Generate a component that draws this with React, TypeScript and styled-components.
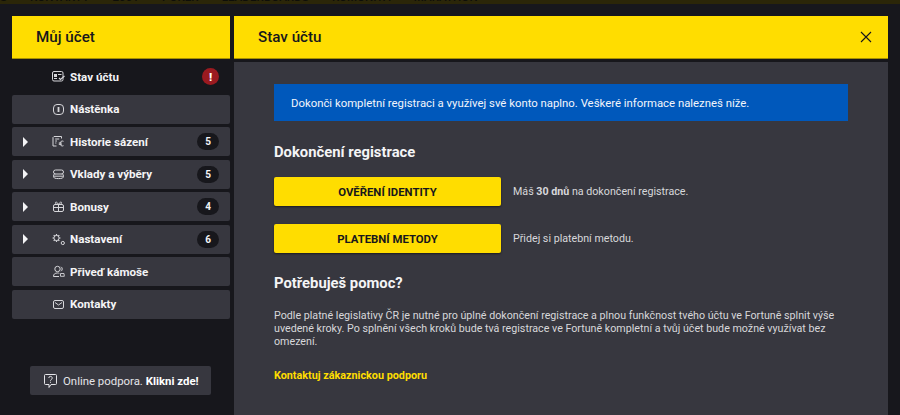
import React, {FC, ReactNode} from 'react';
import styled, {createGlobalStyle} from 'styled-components';

const GlobalStyle = createGlobalStyle`
  html, body {
    margin: 0;
    padding: 0;
    height: 415px;
    overflow: hidden;
    background: #17171c;
  }
  * { box-sizing: border-box; }
`;

//region Styled
const Page = styled.div`
  width: 900px;
  height: 415px;
  overflow: hidden;
  background: #17171c;
  color: #fff;
  font-family: Roboto, "Liberation Sans", sans-serif;
  display: flex;
  flex-direction: column;
`;

const TopNav = styled.nav`
  height: 4px;
  flex: none;
  background: #2b2608;
  overflow: hidden;
  display: flex;
  gap: 23px;
  color: #0e0e08;
  font-size: 11.5px;
  font-weight: 500;
  letter-spacing: 0.1px;
  white-space: nowrap;
  align-items: flex-end;
`;

const Modal = styled.div`
  flex: 1;
  display: grid;
  grid-template-columns: 218px 654px;
  column-gap: 4px;
  padding: 12px 0 0 12px;
  min-height: 0;
`;

const Side = styled.aside`
  display: flex;
  flex-direction: column;
  min-height: 0;
`;

const Header = styled.header`
  height: 43px;
  background: #ffdd00;
  border-bottom: 1px solid #a89200;
  color: #17171c;
  font-size: 15.2px;
  font-weight: 500;
  display: flex;
  align-items: center;
  justify-content: space-between;
  flex: none;
`;

const SideHeader = styled(Header)`
  padding-left: 24px;
`;

const MainHeader = styled(Header)`
  padding: 0 16px 0 24px;
`;

const Menu = styled.ul`
  list-style: none;
  margin: 0;
  padding: 3px 0 0;
  display: flex;
  flex-direction: column;
  gap: 3.5px;
`;

const MenuItem = styled.li<{$active?: boolean}>`
  height: 29px;
  border-radius: 2px;
  background: ${p => (p.$active ? 'transparent' : '#37373f')};
  position: relative;
  display: flex;
  align-items: center;
  padding: 0 11px 0 40px;
  font-size: 11.6px;
  font-weight: 700;
  color: #f4f4f6;
`;

const Caret = styled.span`
  position: absolute;
  left: 11px;
  top: 50%;
  margin-top: -5px;
  width: 0;
  height: 0;
  border-style: solid;
  border-width: 5px 0 5px 5px;
  border-color: transparent transparent transparent #f4f4f6;
`;

const IconSlot = styled.span`
  width: 18px;
  display: flex;
  align-items: center;
  color: #d6d6da;
  flex: none;
`;

const Label = styled.span`
  flex: 1;
`;

const Badge = styled.span`
  min-width: 22px;
  height: 17px;
  border-radius: 9px;
  background: #17171c;
  color: #f4f4f6;
  font-size: 10px;
  font-weight: 700;
  display: flex;
  align-items: center;
  justify-content: center;
`;

const AlertBadge = styled.span`
  width: 17px;
  height: 17px;
  border-radius: 50%;
  background: #9b1a20;
  color: #fff;
  font-size: 11.5px;
  font-weight: 900;
  display: flex;
  align-items: center;
  justify-content: center;
`;

const SupportWrap = styled.div`
  margin-top: auto;
  padding: 0 18px 20px;
`;

const SupportButton = styled.button`
  width: 181px;
  height: 29px;
  border: 0;
  border-radius: 2px;
  background: #37373f;
  color: #e4e4e8;
  font-family: inherit;
  font-size: 11.4px;
  display: flex;
  align-items: center;
  gap: 6px;
  padding: 0 0 0 14px;

  b {
    color: #fff;
    font-weight: 700;
  }
`;

const Main = styled.main`
  display: flex;
  flex-direction: column;
  min-height: 0;
`;

const Body = styled.section`
  flex: 1;
  margin-top: 3px;
  background: #37373f;
  padding: 22px 40px 0;
  color: #d7d7db;
  font-size: 10.7px;
`;

const Notice = styled.div`
  height: 37px;
  background: #0058bb;
  color: #f2f5fb;
  font-size: 11.35px;
  display: flex;
  align-items: center;
  padding-left: 17px;
`;

const Title = styled.h2`
  margin: 0;
  color: #f4f4f6;
  font-size: 14.8px;
  font-weight: 700;
  line-height: 18px;
`;

const SectionTitle = styled(Title)`
  margin-top: 22px;
`;

const HelpTitle = styled(Title)`
  margin-top: 21px;
`;

const Steps = styled.div`
  display: flex;
  flex-direction: column;
  gap: 18px;
  margin-top: 16px;
`;

const Step = styled.div`
  display: flex;
  align-items: center;
  gap: 12px;
`;

const StepButton = styled.button`
  width: 227px;
  height: 29px;
  border: 0;
  border-radius: 2px;
  background: #ffdd00;
  color: #17171c;
  font-family: inherit;
  font-size: 11.35px;
  font-weight: 700;
  box-shadow: 0 1px 2px rgba(0, 0, 0, 0.5);
`;

const StepText = styled.span`
  b {
    font-weight: 700;
  }
`;

const Paragraph = styled.p`
  margin: 17px 0 0;
  line-height: 13px;
`;

const SupportLink = styled.a`
  display: block;
  margin-top: 21px;
  color: #ffdd00;
  font-size: 10.8px;
  font-weight: 700;
`;

const CloseButton = styled.button`
  border: 0;
  background: none;
  padding: 0;
  color: #17171c;
  display: flex;
`;
//endregion

const Svg: FC<{children: ReactNode}> = ({children}) => (
    <svg width="13" height="13" viewBox="0 0 13 13" fill="none" stroke="currentColor" strokeWidth="1">
        {children}
    </svg>
);

const icons: Record<string, ReactNode> = {
    status: (
        <Svg>
            <rect x="0.500" y="1.500" width="10.500" height="9.500" rx="1.500"/>
            <rect x="2" y="4" width="3" height="3" fill="currentColor" stroke="none"/>
            <path d="M2 8.500h3M6 4.500h3.500"/>
            <path d="M7 8l1.500 1.500 4-3.500" strokeWidth="1.200"/>
        </Svg>
    ),
    board: (
        <Svg>
            <rect x="1.500" y="1.500" width="10" height="10" rx="3.500"/>
            <path d="M6.500 4v5" strokeWidth="1.800"/>
        </Svg>
    ),
    history: (
        <Svg>
            <path d="M9.500 3.500V1.500h-7.500l-1 1v8.500h3.500"/>
            <path d="M3.200 4h4M3.200 6h1.800M3.200 8h1.200"/>
            <path d="M11.500 6.300c-1.800-.8-3.300.1-3.300 2.200s1.500 3 3.300 2.200M6.800 8h3M6.800 9.300h3"/>
        </Svg>
    ),
    deposit: (
        <Svg>
            <rect x="1.500" y="2" width="10" height="4" rx="2"/>
            <path d="M3.500 6H2.800C2 6 1.500 6.800 1.500 8s.5 2 1.500 2.200c1 .3 2.200.4 3.500.4s2.500-.1 3.500-.4c1-.2 1.500-1 1.500-2.200s-.5-2-1.300-2h-.7"/>
            <path d="M1.800 8.200h9.400"/>
        </Svg>
    ),
    bonus: (
        <Svg>
            <rect x="1.500" y="4.500" width="10" height="7" rx="1.500"/>
            <path d="M1.500 7.500h10M6.500 4.500v7"/>
            <path d="M6.500 4.500C5 1.500 3 1.500 3.500 3.300c.2.800 1.500 1.200 3 1.200s2.800-.4 3-1.200c.5-1.800-1.500-1.800-3 1.200z"/>
        </Svg>
    ),
    settings: (
        <svg width="13" height="13" viewBox="0 0 13 13" fill="none" stroke="currentColor">
            <circle cx="4.500" cy="5" r="2.600" strokeWidth="1"/>
            <path d="M4.500 1v1.500M4.500 7.500V9M.5 5H2M7 5h1.500M1.700 2.200l1 1M6.300 6.800l1 1M7.300 2.200l-1 1M2.700 6.800l-1 1" strokeWidth="1.200"/>
            <circle cx="10.800" cy="10" r="1.600" strokeWidth="1"/>
        </svg>
    ),
    friend: (
        <Svg>
            <circle cx="5.500" cy="4" r="2.700"/>
            <path d="M1.500 11.500c0-2.500 1.500-3.500 4-3.500.8 0 1.300.1 1.800.3M1.500 11.500h5.500"/>
            <path d="M9 1.800a2.600 2.600 0 0 1 0 4.400"/>
            <path d="M8.500 8.500h3.500l.3 2.800h-3.800z" strokeWidth="0.900"/>
        </Svg>
    ),
    mail: (
        <Svg>
            <rect x="1.500" y="2.500" width="10" height="8" rx="1.500"/>
            <path d="M3 4.500l3.500 2.500L10 4.500"/>
        </Svg>
    ),
};

interface Item {
    id: string,
    label: string,
    icon: string,
    count?: number,
    expandable?: boolean,
}

const navItems = ['S', 'KONTAKTY', '2001', 'POKER', 'LEADERBOARDS', 'KOMUNITA', 'MARATHON'];

const items: Item[] = [
    {id: 'board', label: 'Nástěnka', icon: 'board'},
    {id: 'history', label: 'Historie sázení', icon: 'history', count: 5, expandable: true},
    {id: 'deposit', label: 'Vklady a výběry', icon: 'deposit', count: 5, expandable: true},
    {id: 'bonus', label: 'Bonusy', icon: 'bonus', count: 4, expandable: true},
    {id: 'settings', label: 'Nastavení', icon: 'settings', count: 6, expandable: true},
    {id: 'friend', label: 'Přiveď kámoše', icon: 'friend'},
    {id: 'mail', label: 'Kontakty', icon: 'mail'},
];

const App: FC = () => {
    return (
        <Page>
            <GlobalStyle/>
            <TopNav>
                {navItems.map(name => <span key={name}>{name}</span>)}
            </TopNav>
            <Modal>
                <Side>
                    <SideHeader>Můj účet</SideHeader>
                    <Menu>
                        <MenuItem $active>
                            <IconSlot>{icons.status}</IconSlot>
                            <Label>Stav účtu</Label>
                            <AlertBadge>!</AlertBadge>
                        </MenuItem>
                        {items.map(item => (
                            <MenuItem key={item.id}>
                                {item.expandable && <Caret/>}
                                <IconSlot>{icons[item.icon]}</IconSlot>
                                <Label>{item.label}</Label>
                                {item.count !== undefined && <Badge>{item.count}</Badge>}
                            </MenuItem>
                        ))}
                    </Menu>
                    <SupportWrap>
                        <SupportButton>
                            <svg width="13" height="14" viewBox="0 0 13 14" fill="none" stroke="currentColor" strokeWidth="1">
                                <path d="M1.500.5h10a1 1 0 0 1 1 1v8a1 1 0 0 1-1 1H7l-2 3v-3H1.500a1 1 0 0 1-1-1v-8a1 1 0 0 1 1-1z"/>
                                <path d="M4.800 4a1.700 1.700 0 1 1 2.400 1.600c-.5.3-.7.6-.7 1.200M6.500 7.800v1"/>
                            </svg>
                            <span>Online podpora. <b>Klikni zde!</b></span>
                        </SupportButton>
                    </SupportWrap>
                </Side>
                <Main>
                    <MainHeader>
                        Stav účtu
                        <CloseButton aria-label="Zavřít">
                            <svg width="12" height="12" viewBox="0 0 12 12" stroke="currentColor" strokeWidth="1.100">
                                <path d="M1 1l10 10M11 1L1 11"/>
                            </svg>
                        </CloseButton>
                    </MainHeader>
                    <Body>
                        <Notice>Dokonči kompletní registraci a využívej své konto naplno. Veškeré informace nalezneš níže.</Notice>
                        <SectionTitle>Dokončení registrace</SectionTitle>
                        <Steps>
                            <Step>
                                <StepButton>OVĚŘENÍ IDENTITY</StepButton>
                                <StepText>Máš <b>30 dnů</b> na dokončení registrace.</StepText>
                            </Step>
                            <Step>
                                <StepButton>PLATEBNÍ METODY</StepButton>
                                <StepText>Přidej si platební metodu.</StepText>
                            </Step>
                        </Steps>
                        <HelpTitle>Potřebuješ pomoc?</HelpTitle>
                        <Paragraph>
                            Podle platné legislativy ČR je nutné pro úplné dokončení registrace a plnou funkčnost tvého účtu ve Fortuně splnit výše
                            uvedené kroky. Po splnění všech kroků bude tvá registrace ve Fortuně kompletní a tvůj účet bude možné využívat bez
                            omezení.
                        </Paragraph>
                        <SupportLink>Kontaktuj zákaznickou podporu</SupportLink>
                    </Body>
                </Main>
            </Modal>
        </Page>
    );
};

export default App;
